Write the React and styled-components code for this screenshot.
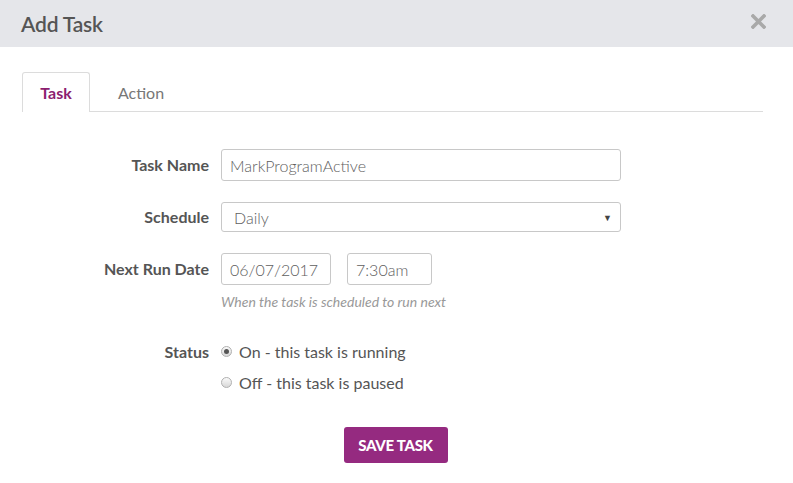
import styled, { createGlobalStyle } from "styled-components"

const GlobalStyle = createGlobalStyle`
    html, body {
        margin: 0;
        padding: 0;
        background: #fff;
        font-family: Lato, "Open Sans", "Liberation Sans", sans-serif;
    }
`

const Modal = styled.div`
    width: 793px;
    height: 483px;
    background: #fff;
    overflow: hidden;
`

const Header = styled.div`
    height: 47px;
    background: #e5e6ea;
    display: flex;
    align-items: center;
    justify-content: space-between;
    padding: 0 27px 0 21px;
    box-sizing: border-box;
`

const Title = styled.h2`
    margin: 0;
    font-size: 21px;
    font-weight: 600;
    color: #555;
    letter-spacing: -0.2px;
`

const Close = styled.svg`
    width: 15px;
    height: 15px;
    margin-top: -4px;
    cursor: pointer;
`

const Body = styled.div`
    padding: 25px 30px 0 22px;
`

const TabBar = styled.div`
    display: flex;
    border-bottom: 1px solid #dcdcdc;
    height: 39px;
`

const Tab = styled.div`
    width: ${p => p.active ? "68px" : "auto"};
    padding: ${p => p.active ? "0" : "0 27px"};
    box-sizing: border-box;
    display: flex;
    align-items: center;
    justify-content: center;
    font-size: 16px;
    font-weight: ${p => p.active ? 700 : 400};
    color: ${p => p.active ? "#8c1d6f" : "#777"};
    background: ${p => p.active ? "#fff" : "transparent"};
    border: 1px solid ${p => p.active ? "#dcdcdc" : "transparent"};
    border-bottom: none;
    border-radius: 3px 3px 0 0;
    margin-bottom: ${p => p.active ? "-1px" : "0"};
    height: ${p => p.active ? "40px" : "39px"};
`

const Form = styled.div`
    display: grid;
    grid-template-columns: 187px 1fr;
    column-gap: 12px;
    margin-top: 37px;
`

const Label = styled.div`
    text-align: right;
    font-size: 16px;
    font-weight: 700;
    color: #555;
    padding-top: ${p => p.top || "6px"};
`

const Field = styled.div`
    margin-bottom: ${p => p.gap || "21px"};
`

const Input = styled.div`
    width: ${p => p.width};
    height: ${p => p.height || "32px"};
    box-sizing: border-box;
    border: 1px solid #c8c8c8;
    border-radius: 3px;
    font-size: 16px;
    font-weight: 300;
    color: #5e5e5e;
    padding-left: ${p => p.pad || "8px"};
    display: flex;
    align-items: center;
    justify-content: space-between;
    background: #fff;
`

const Arrow = styled.span`
    font-size: 9px;
    color: #444;
    margin-right: 8px;
`

const Inline = styled.div`
    display: flex;
    gap: 16px;
`

const Help = styled.div`
    font-size: 14px;
    font-style: italic;
    color: #999;
    margin-top: 8px;
`

const RadioList = styled.div`
    display: flex;
    flex-direction: column;
    gap: 12px;
    padding-top: 6px;
`

const RadioRow = styled.label`
    display: flex;
    align-items: center;
    font-size: 16px;
    color: #555;
    gap: 7px;
`

const Radio = styled.span`
    width: 11px;
    height: 11px;
    border-radius: 50%;
    box-sizing: border-box;
    border: 1px solid #b0b0b0;
    background: linear-gradient(#fafafa, #d8d8d8);
    display: inline-flex;
    align-items: center;
    justify-content: center;
    &::after {
        content: "";
        width: 5px;
        height: 5px;
        border-radius: 50%;
        background: ${p => p.checked ? "#555" : "transparent"};
    }
`

const Footer = styled.div`
    display: flex;
    justify-content: center;
    padding-left: 6px;
    margin-top: 35px;
`

const SaveButton = styled.button`
    width: 104px;
    height: 36px;
    background: #952a80;
    color: #fff;
    border: none;
    border-radius: 3px;
    font-family: inherit;
    font-size: 15px;
    font-weight: 900;
    letter-spacing: -0.3px;
    text-transform: uppercase;
    cursor: pointer;
`

const App = () => {
    return <Modal>
        <GlobalStyle />
        <Header>
            <Title>Add Task</Title>
            <Close viewBox="0 0 15 15">
                <path d="M2 2L13 13M13 2L2 13" stroke="#a9a9a9" strokeWidth="3.6" strokeLinecap="square" />
            </Close>
        </Header>
        <Body>
            <TabBar>
                <Tab active>Task</Tab>
                <Tab>Action</Tab>
            </TabBar>
            <Form>
                <Label>Task Name</Label>
                <Field>
                    <Input width="400px">MarkProgramActive</Input>
                </Field>
                <Label top="5px">Schedule</Label>
                <Field>
                    <Input width="400px" height="30px" pad="12px">Daily<Arrow>▼</Arrow></Input>
                </Field>
                <Label>Next Run Date</Label>
                <Field gap="26px">
                    <Inline>
                        <Input width="110px">06/07/2017</Input>
                        <Input width="85px">7:30am</Input>
                    </Inline>
                    <Help>When the task is scheduled to run next</Help>
                </Field>
                <Label>Status</Label>
                <RadioList>
                    <RadioRow><Radio checked />On - this task is running</RadioRow>
                    <RadioRow><Radio />Off - this task is paused</RadioRow>
                </RadioList>
            </Form>
            <Footer>
                <SaveButton>Save Task</SaveButton>
            </Footer>
        </Body>
    </Modal>
}

export default App
